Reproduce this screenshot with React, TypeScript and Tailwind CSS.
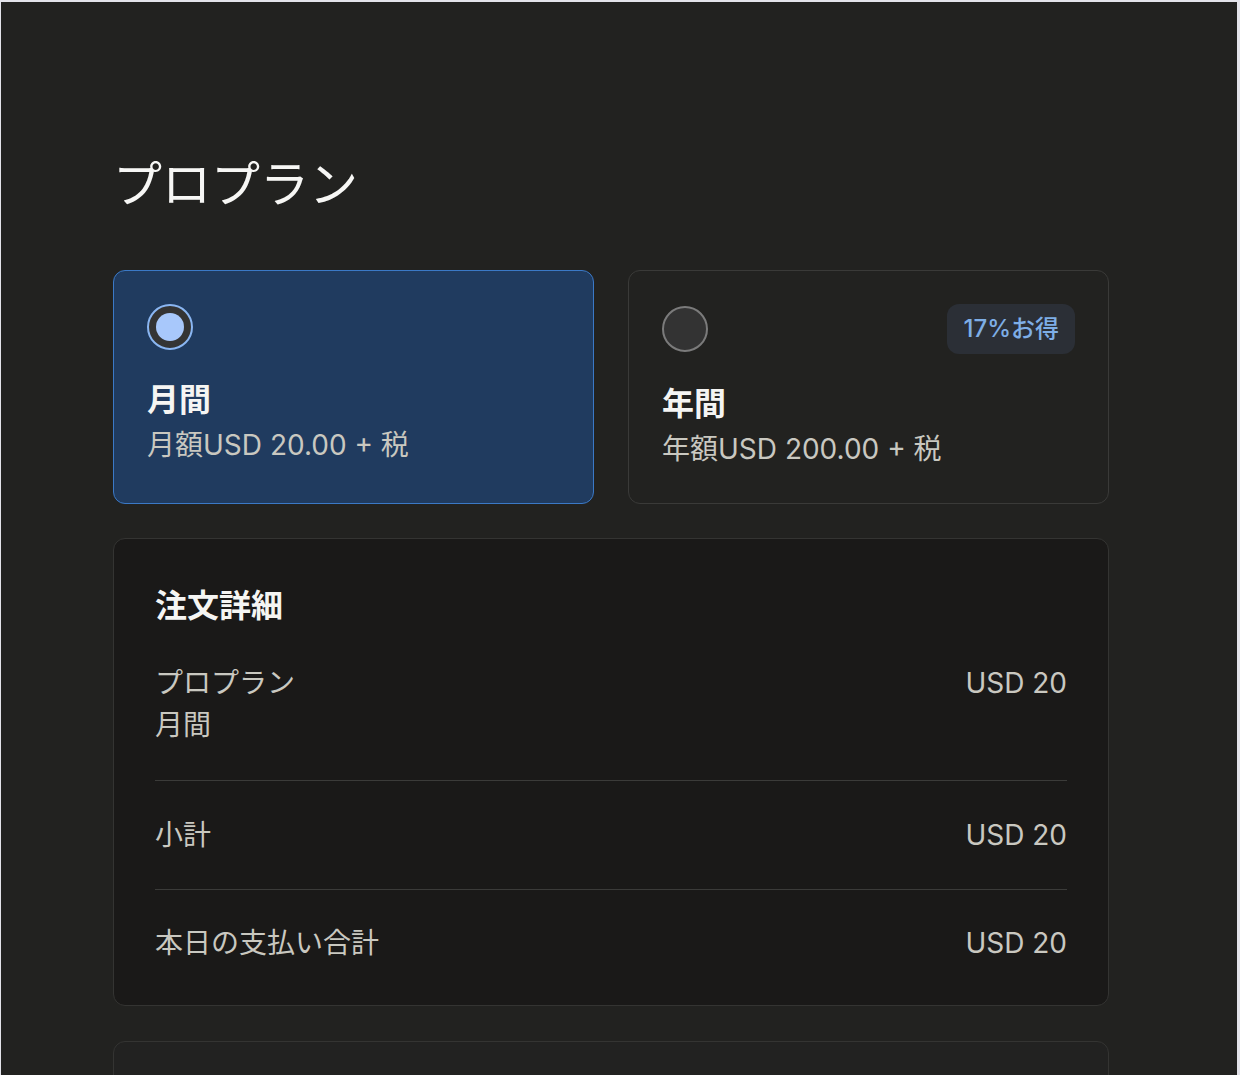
import React from 'react';

const font = { fontFamily: 'Inter, "Noto Sans CJK JP", sans-serif' };

interface PlanCardProps {
  selected?: boolean;
  title: string;
  price: string;
  badge?: string;
}

const PlanCard: React.FC<PlanCardProps> = ({ selected, title, price, badge }) => {
  return (
    <div
      className={
        selected
          ? 'h-[234px] rounded-[12px] border border-[#3b79c6] bg-[#203b5f] px-[33px] pt-[33px]'
          : 'h-[234px] rounded-[12px] border border-[#3a3a38] bg-[#222220] px-[33px] pt-[33px]'
      }
    >
      <div className="flex items-center justify-between">
        {selected ? (
          <div className="flex h-[46px] w-[46px] items-center justify-center rounded-full border-2 border-[#8ab6f2] bg-[#343434]">
            <div className="h-[28px] w-[28px] rounded-full bg-[#a8c8fb]" />
          </div>
        ) : (
          <div className="h-[46px] w-[46px] rounded-full border-2 border-[#7b7b7b] bg-[#333333]" />
        )}
        {badge && (
          <div className="flex h-[50px] items-center rounded-[12px] bg-[#2b2f36] px-[16px] text-[24px] font-medium text-[#7eaee6]">
            {badge}
          </div>
        )}
      </div>
      <div className="mt-[30px] text-[32px] font-semibold leading-[40px] text-[#f5f5f3]">{title}</div>
      <div className="mt-[7px] text-[28px] leading-[36px] text-[#c9c8c0]">{price}</div>
    </div>
  );
};

const App: React.FC = () => {
  return (
    <div className="h-[1075px] overflow-hidden bg-[#e3e3ea] pl-[1px] pr-[3px] pt-[2px]" style={font}>
      <div className="h-full bg-[#222220] pl-[112px] pt-[154px]">
        <div className="w-[996px]">
          <h1 className="text-[49px] leading-[58px] text-[#f7f7f5]">プロプラン</h1>

          <div className="mt-[56px] grid grid-cols-2 gap-[34px]">
            <PlanCard selected title="月間" price="月額USD 20.00 + 税" />
            <PlanCard title="年間" price="年額USD 200.00 + 税" badge="17%お得" />
          </div>

          <div className="mt-[34px] rounded-[12px] border border-[#343432] bg-[#1a1918] px-[41px] pb-[44px] pt-[47px]">
            <h2 className="text-[32px] font-semibold leading-[40px] text-[#f5f5f3]">注文詳細</h2>

            <div className="flex justify-between border-b border-[#3b3b39] pb-[37px] pt-[39px] text-[28px] leading-[36px] text-[#c9c8c0]">
              <div className="flex flex-col gap-[6px]">
                <span>プロプラン</span>
                <span>月間</span>
              </div>
              <span>USD 20</span>
            </div>

            <div className="flex justify-between border-b border-[#3b3b39] py-[36px] text-[28px] leading-[36px] text-[#c9c8c0]">
              <span>小計</span>
              <span>USD 20</span>
            </div>

            <div className="flex justify-between pt-[35px] text-[28px] leading-[36px] text-[#c9c8c0]">
              <span>本日の支払い合計</span>
              <span>USD 20</span>
            </div>
          </div>

          <div className="mt-[35px] h-[200px] rounded-[12px] border border-[#343432] bg-[#222221]" />
        </div>
      </div>
    </div>
  );
};

export default App;
